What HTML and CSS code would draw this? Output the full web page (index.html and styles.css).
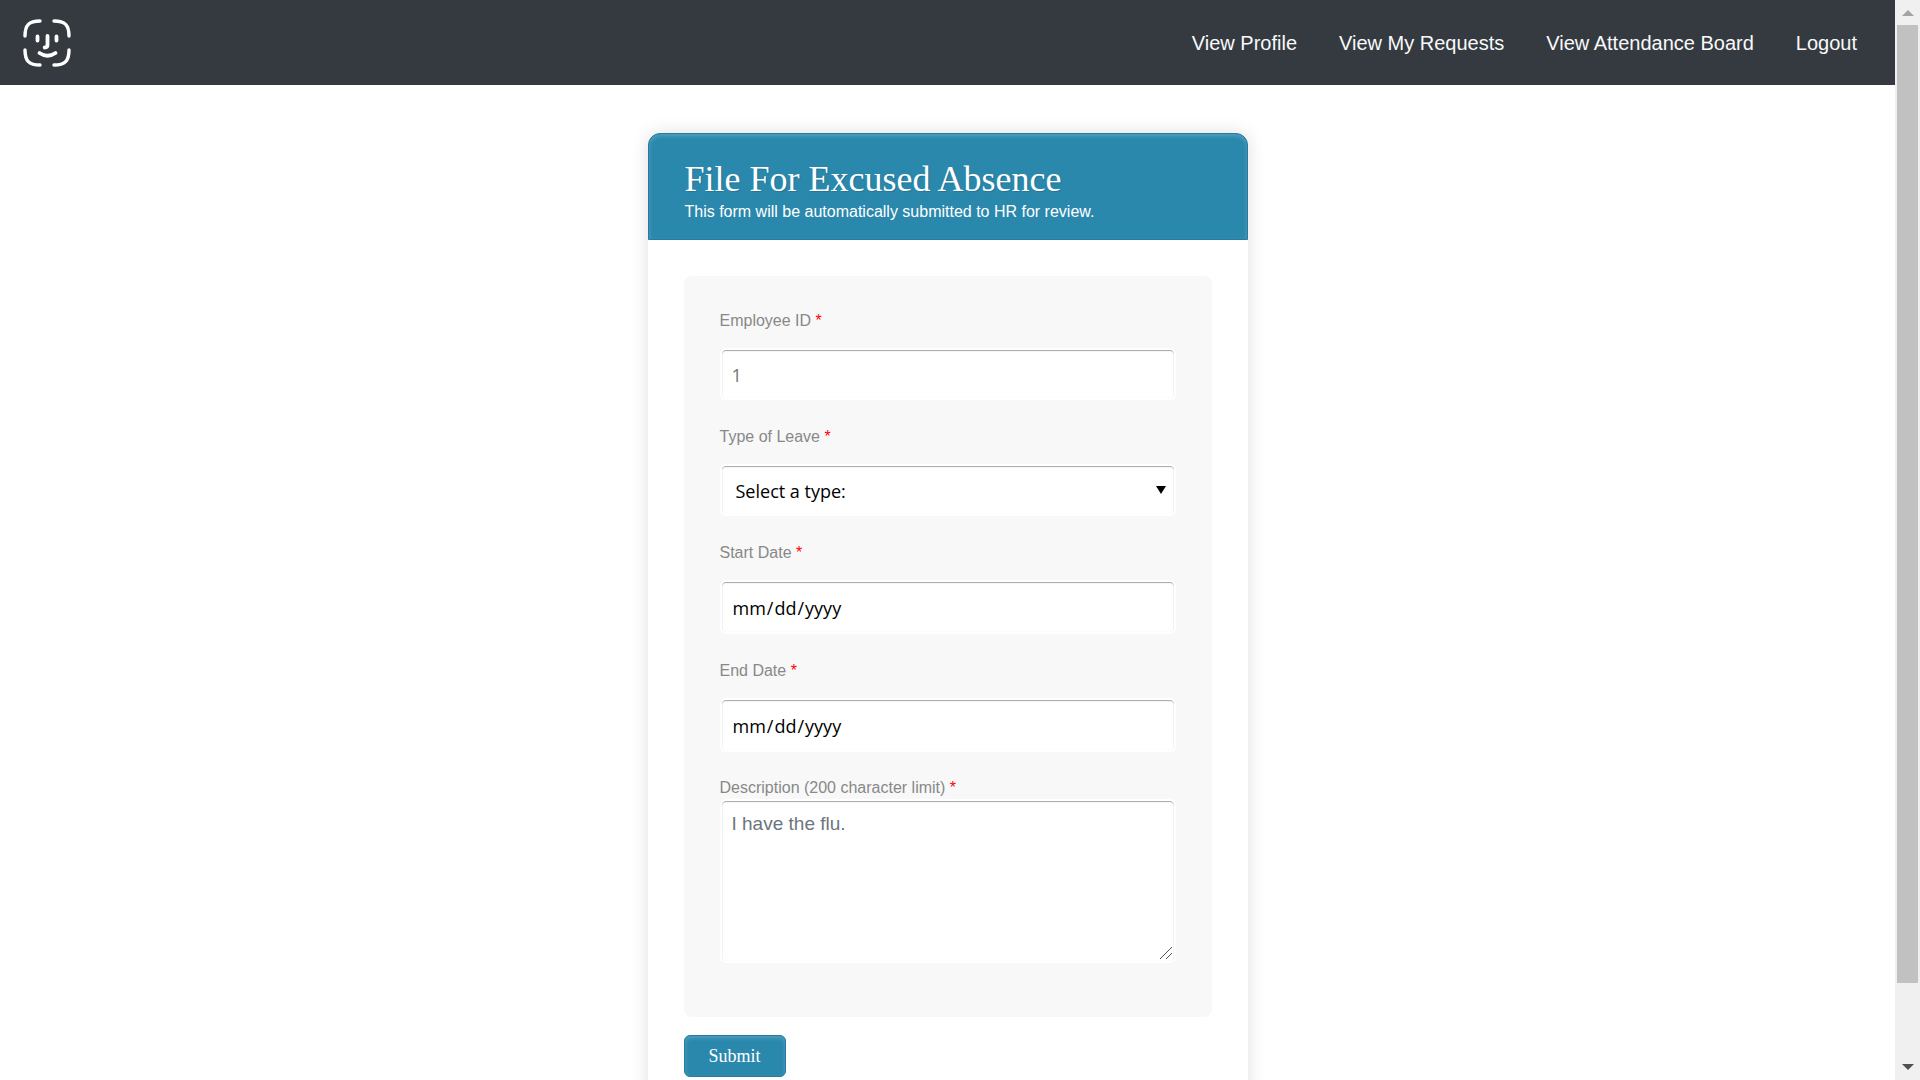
FILE: index.html
```html
<!DOCTYPE html>
<html lang="en">
<head>
  <meta charset="utf-8">
  <title>File For Excused Absence</title>
  <link rel="stylesheet" href="styles.css">
</head>
<body>
  <div class="page">
    <header class="navbar">
      <a class="brand" href="#" aria-label="Home">
        <svg class="brand-icon" viewBox="0 0 48 48" fill="none" stroke="#fff" stroke-width="3.400" stroke-linecap="round">
          <path d="M2 17C2 6 6 2 17 2M31 2C42 2 46 6 46 17M46 31C46 42 42 46 31 46M17 46C6 46 2 42 2 31"/>
          <path d="M14.500 17.500v4M33.500 17.500v4M24.500 17v9q0 2.500-2.800 2.500M16.500 34q8 5.500 16 0" stroke-width="3.800"/>
        </svg>
      </a>
      <nav class="nav-links">
        <a href="#">View Profile</a>
        <a href="#">View My Requests</a>
        <a href="#">View Attendance Board</a>
        <a href="#">Logout</a>
      </nav>
    </header>
    <main class="card">
      <div class="card-header">
        <h1>File For Excused Absence</h1>
        <p>This form will be automatically submitted to HR for review.</p>
      </div>
      <form class="form">
        <div class="panel">
          <div class="field">
            <label for="employee">Employee ID <span class="required">*</span></label>
            <input class="control" id="employee" type="text" placeholder="1">
          </div>
          <div class="field">
            <label for="leave">Type of Leave <span class="required">*</span></label>
            <div class="select-wrap">
              <select class="control" id="leave"><option>Select a type:</option></select>
            </div>
          </div>
          <div class="field">
            <label for="start">Start Date <span class="required">*</span></label>
            <input class="control date" id="start" type="date">
          </div>
          <div class="field">
            <label for="end">End Date <span class="required">*</span></label>
            <input class="control date" id="end" type="date">
          </div>
          <div class="field field-tight">
            <label for="description">Description (200 character limit) <span class="required">*</span></label>
            <textarea class="control" id="description" maxlength="200" placeholder="I have the flu."></textarea>
          </div>
        </div>
        <button class="submit" type="submit">Submit</button>
      </form>
    </main>
  </div>
  <div class="scrollbar" aria-hidden="true">
    <svg class="arrow" viewBox="0 0 12 6"><path d="M6 0l6 6H0z" fill="#a3a3a3"/></svg>
    <div class="track"><div class="thumb"></div></div>
    <svg class="arrow" viewBox="0 0 12 6"><path d="M6 6l6-6H0z" fill="#505050"/></svg>
  </div>
</body>
</html>
```
FILE: styles.css
```css
* { box-sizing: border-box; }

body {
  margin: 0;
  display: grid;
  grid-template-columns: 1fr 25px;
  height: 100vh;
  overflow: hidden;
  background: #fff;
  font: 16px/24px "Liberation Sans", Arial, sans-serif;
}

.page { min-height: 0; overflow: hidden; }

.navbar {
  display: flex;
  align-items: center;
  justify-content: space-between;
  padding: 19px 38px 18px 23px;
  background: #343a40;
}

.brand { display: flex; }
.brand-icon { width: 48px; height: 48px; }
.nav-links { display: flex; gap: 42px; }
.nav-links a { color: #f8f9fa; font-size: 20px; line-height: 30px; text-decoration: none; }

.card {
  width: 600px;
  max-width: 100%;
  margin: 48px auto 60px;
  border-radius: 12px;
  background: #fff;
  box-shadow: 0 0 18px rgba(0, 0, 0, 0.13);
}

.card-header {
  padding: 27px 36px 15px;
  border: 1px solid #257c9e;
  border-radius: 12px 12px 0 0;
  background: #2a88ad;
  box-shadow: inset 0 2px 4px rgba(255, 255, 255, 0.2);
  color: #fff;
}

.card-header h1 {
  margin: 0 0 3px;
  font: 36px/36px "Liberation Serif", "Times New Roman", serif;
  text-shadow: 1px 1px 1px rgba(0, 0, 0, 0.15);
}
.card-header p { margin: 0; }

.form { padding: 36px 36px 48px; }

.panel {
  margin-bottom: 18px;
  padding: 33px 36px 54px;
  border-radius: 8px;
  background: #f8f8f8;
}

.field { margin-bottom: 25px; }
.field label { display: block; margin-bottom: 15px; color: #888; }
.field-tight { margin-bottom: 0; }
.field-tight label { margin-bottom: 0; line-height: 22px; }
.required { color: #f00; }

.control {
  display: block;
  width: 100%;
  height: 52px;
  padding: 9px 10px 7px;
  border: 2px solid #fff;
  border-radius: 6px;
  outline: 0;
  background: #fff;
  box-shadow: inset 0 1px 1px rgba(0, 0, 0, 0.35), inset 0 0 1px rgba(0, 0, 0, 0.12);
  color: #000;
  font: 18px/27px "Open Sans", "Noto Sans", sans-serif;
}
.control::placeholder { color: #757575; }

.date { height: 54px; }
.date::-webkit-calendar-picker-indicator { display: none; }

.select-wrap { display: grid; }
.select-wrap > .control { grid-area: 1 / 1; padding-left: 14px; appearance: none; }
.select-wrap::after {
  content: "";
  grid-area: 1 / 1;
  place-self: center end;
  margin-right: 10px;
  border: 5px solid transparent;
  border-top: 8px solid #000;
  border-bottom: 0;
  pointer-events: none;
  z-index: 1;
}

textarea.control {
  height: 164px;
  font: 19px/27px "Liberation Sans", Arial, sans-serif;
  resize: vertical;
}
textarea.control::placeholder { color: #6c757d; }
textarea.control::-webkit-resizer {
  background: url("data:image/svg+xml,%3Csvg xmlns='http://www.w3.org/2000/svg' width='15' height='15'%3E%3Cpath d='M1 13L13 1M7 13L13 7' stroke='%23555'/%3E%3C/svg%3E") no-repeat;
}

.submit {
  display: block;
  height: 42px;
  padding: 0 24px;
  border: 1px solid #257c9e;
  border-radius: 6px;
  background: #2a88ad;
  box-shadow: inset 0 2px 4px rgba(255, 255, 255, 0.2);
  color: #fff;
  font: 18px/24px "Liberation Serif", "Times New Roman", serif;
}

.scrollbar {
  display: flex;
  flex-direction: column;
  align-items: center;
  gap: 9px;
  padding: 10px 2px;
  background: #f0f0f0;
}
.arrow { width: 12px; height: 6px; flex: none; }
.track { width: 100%; flex: 1; }
.thumb { height: 93%; background: #c1c1c1; }
```
